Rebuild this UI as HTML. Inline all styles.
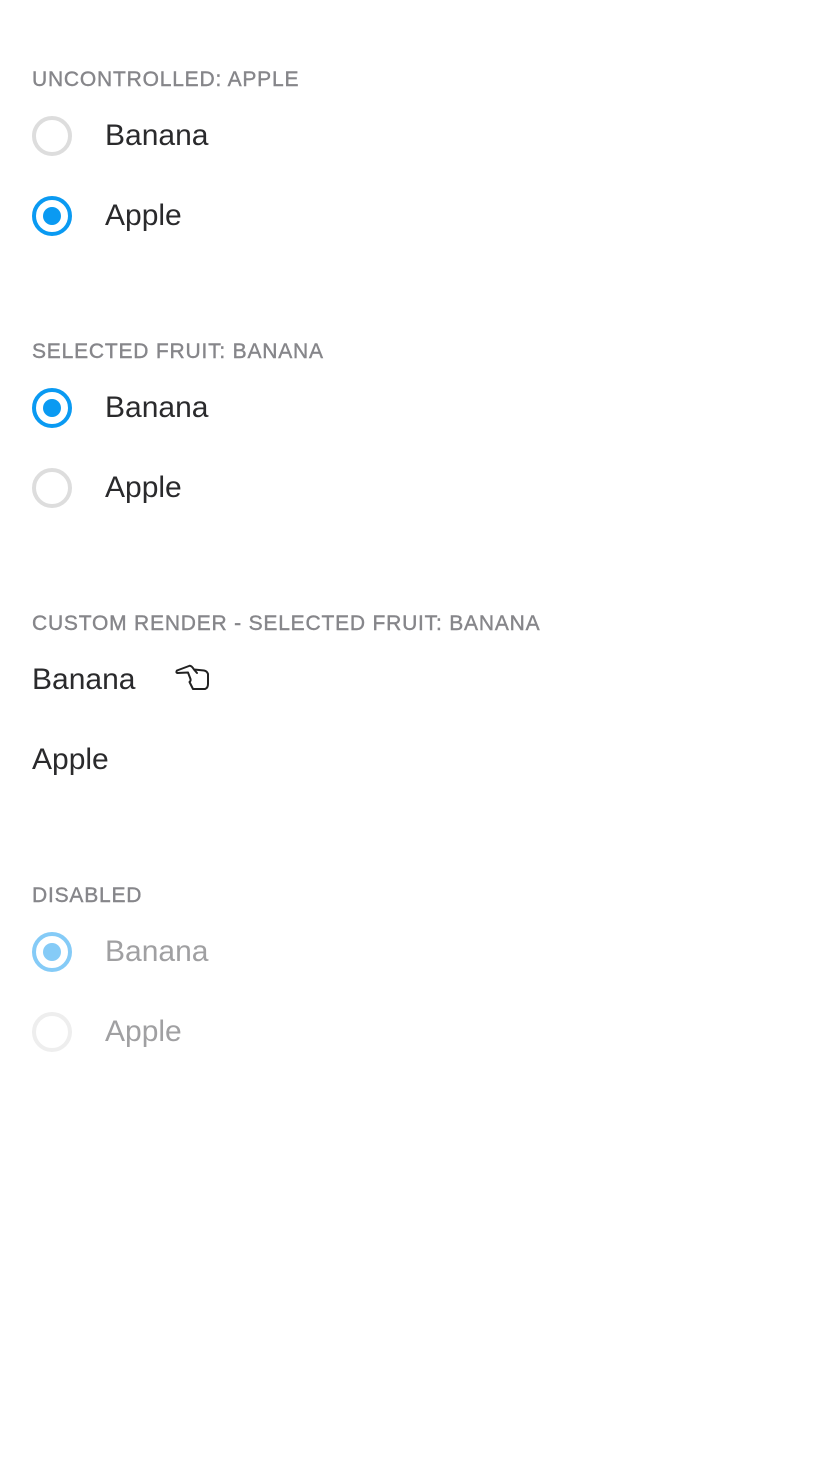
<!DOCTYPE html>
<html><head><style>
body{margin:0;background:#fff;font-family:"Liberation Sans",sans-serif;}
.lbl{position:absolute;left:32px;font-size:21px;color:#86868a;line-height:24px;letter-spacing:0.8px;-webkit-text-stroke:0.4px #86868a;}
.row{position:absolute;left:32px;height:40px;display:flex;align-items:center;font-size:30px;color:#2a2a2c;}
.r{width:32px;height:32px;border:4px solid #ddd;border-radius:50%;margin-right:33px;position:relative;flex:none;}
.r.on{border-color:#0a9af2;}
.r.on::after{content:"";position:absolute;left:7px;top:7px;width:18px;height:18px;border-radius:50%;background:#0a9af2;}
.r.don{border-color:#85cbf7;}
.r.don::after{content:"";position:absolute;left:7px;top:7px;width:18px;height:18px;border-radius:50%;background:#85cbf7;}
.r.doff{border-color:#eee;}
.dis{color:#a0a0a2;}
</style></head><body>
<div class="lbl" style="top:68px">UNCONTROLLED: APPLE</div>
<div class="row" style="top:116px"><span class="r"></span>Banana</div>
<div class="row" style="top:196px"><span class="r on"></span>Apple</div>

<div class="lbl" style="top:340px">SELECTED FRUIT: BANANA</div>
<div class="row" style="top:388px"><span class="r on"></span>Banana</div>
<div class="row" style="top:468px"><span class="r"></span>Apple</div>

<div class="lbl" style="top:612px">CUSTOM RENDER - SELECTED FRUIT: BANANA</div>
<div class="row" style="top:660px">Banana</div>
<svg style="position:absolute;left:174px;top:662px" width="38" height="30" viewBox="0 0 38 30" fill="none" stroke="#222" stroke-width="2" stroke-linejoin="round" stroke-linecap="round">
<path d="M15 4 L3 8.5 Q1.5 10.5 3.5 11 L14 10.5 L16.5 17 Q17 19 15.5 20 L19 27 L31 27 Q34 26 34 22 L34 12 Q33 9 30 8.5 L20 7.5 Q17 3 15 4 Z"/>
<path d="M20 7.5 L23 11"/>
</svg>
<div class="row" style="top:740px">Apple</div>

<div class="lbl" style="top:884px">DISABLED</div>
<div class="row dis" style="top:932px"><span class="r don"></span>Banana</div>
<div class="row dis" style="top:1012px"><span class="r doff"></span>Apple</div>
</body></html>
